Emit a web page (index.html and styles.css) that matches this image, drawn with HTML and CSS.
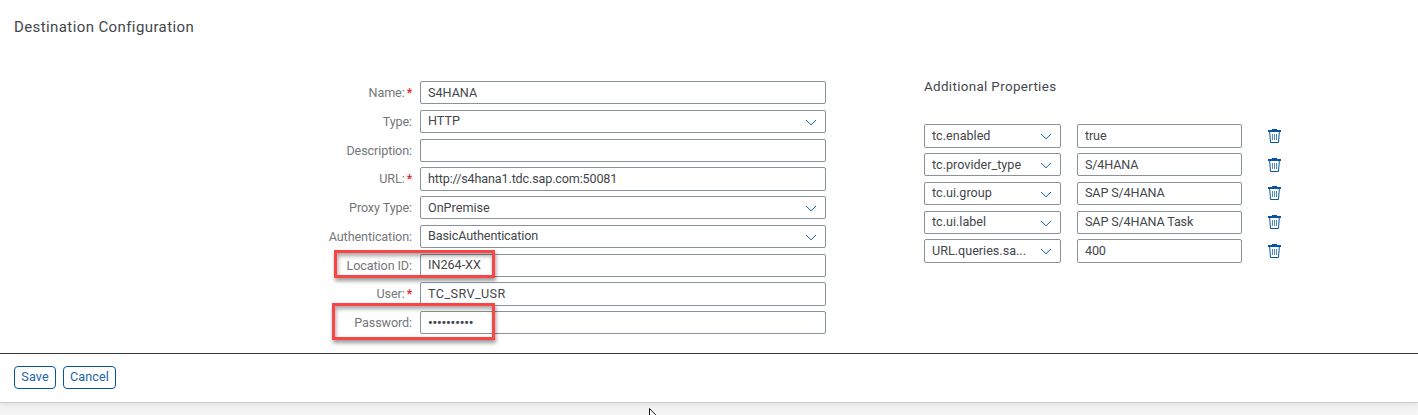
FILE: index.html
```
<!DOCTYPE html>
<html lang="en">
<head>
<meta charset="utf-8">
<title>Destination Configuration</title>
<link rel="stylesheet" href="styles.css">
</head>
<body>
<svg class="defs" aria-hidden="true">
  <symbol id="chevron" viewBox="0 0 12 7"><path d="M1 1 L6 5.8 L11 1" fill="none" stroke="#1562ad" stroke-width="1"/></symbol>
  <symbol id="trash" viewBox="0 0 13 15">
    <path d="M4 0h5v1h4v2H0V1h4z" fill="#0854a0"/>
    <path d="M1.7 3 L2.5 13.5 H10.5 L11.3 3" fill="none" stroke="#0854a0" stroke-width="1"/>
    <path d="M4.5 5 V11 M6.5 5 V11 M8.5 5 V11" stroke="#0854a0" stroke-width=".7"/>
  </symbol>
</svg>
<main class="panel">
  <h1 class="title">Destination Configuration</h1>
  <div class="content">
    <form class="form">
      <div class="row"><label class="req"><span>Name:</span></label><div class="field"><span>S4HANA</span></div></div>
      <div class="row"><label><span>Type:</span></label><div class="field"><span>HTTP</span><svg class="chev"><use href="#chevron"/></svg></div></div>
      <div class="row"><label><span>Description:</span></label><div class="field"></div></div>
      <div class="row"><label class="req"><span>URL:</span></label><div class="field"><span class="url">http://s4hana1.tdc.sap.com:50081</span></div></div>
      <div class="row"><label><span>Proxy Type:</span></label><div class="field"><span>OnPremise</span><svg class="chev"><use href="#chevron"/></svg></div></div>
      <div class="row"><label><span>Authentication:</span></label><div class="field"><span class="auth">BasicAuthentication</span><svg class="chev"><use href="#chevron"/></svg></div></div>
      <div class="row"><label><span>Location ID:</span></label><div class="field"><span>IN264-XX</span></div><i class="mark mark-location"></i></div>
      <div class="row"><label class="req"><span>User:</span></label><div class="field"><span class="user">TC_SRV_USR</span></div></div>
      <div class="row"><label><span>Password:</span></label><div class="field"><span class="dots">••••••••••</span></div><i class="mark mark-password"></i></div>
    </form>
    <section class="props">
      <h2 class="subtitle">Additional Properties</h2>
      <div class="prop"><div class="field key"><span>tc.enabled</span><svg class="chev"><use href="#chevron"/></svg></div><div class="field value"><span>true</span></div><svg class="trash"><use href="#trash"/></svg></div>
      <div class="prop"><div class="field key"><span>tc.provider_type</span><svg class="chev"><use href="#chevron"/></svg></div><div class="field value"><span>S/4HANA</span></div><svg class="trash"><use href="#trash"/></svg></div>
      <div class="prop"><div class="field key"><span>tc.ui.group</span><svg class="chev"><use href="#chevron"/></svg></div><div class="field value"><span>SAP S/4HANA</span></div><svg class="trash"><use href="#trash"/></svg></div>
      <div class="prop"><div class="field key"><span>tc.ui.label</span><svg class="chev"><use href="#chevron"/></svg></div><div class="field value"><span>SAP S/4HANA Task</span></div><svg class="trash"><use href="#trash"/></svg></div>
      <div class="prop"><div class="field key"><span>URL.queries.sa...</span><svg class="chev"><use href="#chevron"/></svg></div><div class="field value"><span>400</span></div><svg class="trash"><use href="#trash"/></svg></div>
    </section>
  </div>
  <footer class="actions"><button class="btn save">Save</button><button class="btn cancel">Cancel</button></footer>
</main>
<svg class="cursor" viewBox="0 0 12 19"><path d="M.5 .5V16L4 12.6 6.5 18 8.6 17 6.2 11.8H11.3Z" fill="#fff" stroke="#111"/></svg>
</body>
</html>
```
FILE: styles.css
```
* { box-sizing: border-box; }
body {
  margin: 0;
  height: 415px;
  overflow: hidden;
  background: #f5f5f5;
  color: #43474b;
  font: 12.6px/16px Roboto, "Liberation Sans", sans-serif;
}
.defs { position: absolute; width: 0; height: 0; }
.panel {
  height: 403px;
  background: #fff;
  border-bottom: 1px solid #c9cccb;
  box-shadow: 0 1px 8px rgba(0, 0, 0, .1);
  display: flex;
  flex-direction: column;
}
.title {
  margin: 0;
  height: 81px;
  padding: 17px 0 0 14px;
  font-size: 15px;
  line-height: 20px;
  font-weight: 400;
  letter-spacing: .4px;
}
.content { display: flex; height: 272px; }
.form { width: 826px; }
.row {
  position: relative;
  display: grid;
  grid-template-columns: 412px 406px;
  column-gap: 8px;
  height: 28.78px;
  align-items: start;
}
label {
  display: flex;
  justify-content: flex-end;
  line-height: 23px;
  color: #74777a;
  letter-spacing: -.1px;
}
.req::after {
  content: "*";
  margin-left: 2px;
  padding-top: 1px;
  color: #d5282b;
  font-weight: 700;
  font-size: 12px;
}
.field {
  display: flex;
  align-items: center;
  justify-content: space-between;
  height: 23.3px;
  padding: 0 8px 0 7px;
  border: 1px solid #89919a;
  border-radius: 2px;
  white-space: nowrap;
  line-height: 20px;
}
.url { letter-spacing: -.15px; }
.auth { letter-spacing: -.13px; }
.user { letter-spacing: .42px; }
.value { letter-spacing: -.15px; }
.chev { width: 12px; height: 7px; margin-top: 2px; flex: none; }
.dots { font-size: 13px; font-weight: 700; letter-spacing: -.15px; }
.mark {
  position: absolute;
  border: 3px solid #fb4444;
  box-shadow: 1px 3px 4px rgba(0, 0, 0, .4), inset 1px 3px 4px rgba(0, 0, 0, .35);
}
.mark-location { left: 334px; top: -4px; width: 161px; height: 28px; }
.mark-password { left: 332px; top: -8px; width: 163px; height: 37px; }
.props { margin-left: 98px; }
.subtitle {
  margin: 0;
  height: 43.28px;
  font-size: 13.4px;
  line-height: 12px;
  font-weight: 400;
  letter-spacing: .34px;
}
.prop {
  display: grid;
  grid-template-columns: 137px 165px 23px;
  column-gap: 16px;
  height: 28.78px;
  align-items: start;
}
.trash { width: 13px; height: 15px; margin: 4.7px 0 0 10px; }
.actions {
  display: flex;
  gap: 7px;
  padding: 12px 0 0 14px;
  border-top: 1px solid #32363a;
}
.btn {
  height: 23px;
  padding: 0 0 2px;
  border: 1px solid #0854a0;
  border-radius: 4px;
  background: #fff;
  color: #2064aa;
  font: inherit;
  letter-spacing: .1px;
}
.save { width: 42px; }
.cancel { width: 53px; }
.cursor { position: absolute; left: 649px; top: 408px; width: 12px; height: 19px; }
```
